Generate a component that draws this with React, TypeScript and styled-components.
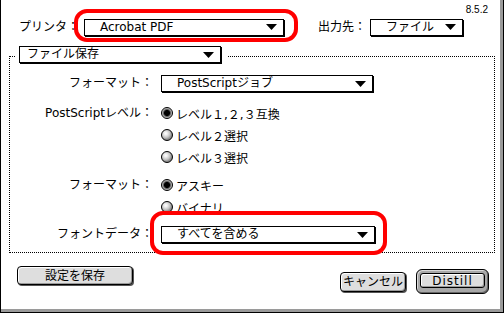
import React from 'react';
import styled, { createGlobalStyle } from 'styled-components';

const Global = createGlobalStyle`
  html, body { margin: 0; padding: 0; background: #fff; }
  body {
    width: 504px; height: 313px; overflow: hidden;
    font-family: "DejaVu Sans", "Noto Sans CJK JP", sans-serif;
    font-size: 12px; color: #000;
  }
`;

const Window = styled.div`
  box-sizing: border-box;
  width: 504px;
  height: 313px;
  border-left: 1px solid #000;
  border-right: 1px solid #000;
  border-bottom: 1px solid #000;
  box-shadow: inset -3px -3px 0 #9a9a9a;
  background: #fff;
  display: flex;
  flex-direction: column;
`;

const Version = styled.div`
  padding: 5px 15px 0 0;
  height: 10px;
  line-height: 10px;
  font-family: "Liberation Sans", sans-serif;
  font-size: 10px;
  text-align: right;
`;

const TopRow = styled.div`
  display: flex;
  align-items: center;
  margin-top: 3px;
  padding-left: 18px;
  height: 18px;
`;

const Label = styled.span<{ $ml?: number }>`
  margin-left: ${p => p.$ml ?? 0}px;
  white-space: nowrap;
  line-height: 18px;
`;

const Highlight = styled.div<{ $t: number; $r: number; $b: number; $l: number; $ml?: number }>`
  position: relative;
  display: flex;
  margin-left: ${p => p.$ml ?? 0}px;
  &::after {
    content: '';
    position: absolute;
    top: -${p => p.$t}px;
    right: -${p => p.$r}px;
    bottom: -${p => p.$b}px;
    left: -${p => p.$l}px;
    border: 4px solid #f00;
    border-radius: 13px;
    pointer-events: none;
  }
`;

const Popup = styled.div<{ $w: number; $pl?: number; $ml?: number }>`
  box-sizing: border-box;
  width: ${p => p.$w}px;
  height: 17px;
  margin-left: ${p => p.$ml ?? 0}px;
  border: 1px solid #000;
  box-shadow: 1px 1px 0 #000;
  background: #fff;
  display: flex;
  align-items: center;
  padding: 0 6px 0 ${p => p.$pl ?? 15}px;
  line-height: 15px;
  white-space: nowrap;
`;

const PopupText = styled.span`
  flex: 1;
`;

const ArrowSvg = styled.svg`
  display: block;
  flex: none;
`;

const Arrow = () => (
  <ArrowSvg width="11" height="6" viewBox="0 0 11 6">
    <polygon points="0,0 11,0 5.5,6" fill="#000" />
  </ArrowSvg>
);

const Group = styled.div`
  position: relative;
  box-sizing: border-box;
  width: 486px;
  margin: 20px 0 0 8px;
  padding: 18px 0 9px 0;
  border: 1px dotted #000;
  display: flex;
  flex-direction: column;
`;

const TabWrap = styled.div`
  position: absolute;
  top: -11px;
  left: 5px;
  padding: 0 6px 0 4px;
  background: #fff;
`;

const Row = styled.div<{ $mt: number }>`
  display: flex;
  align-items: flex-start;
  margin-top: ${p => p.$mt}px;
`;

const FieldLabel = styled.div<{ $lh: number }>`
  width: 143px;
  margin-right: 8px;
  text-align: right;
  white-space: nowrap;
  line-height: ${p => p.$lh}px;
`;

const RadioGroup = styled.div`
  display: flex;
  flex-direction: column;
`;

const RadioItem = styled.div`
  display: flex;
  align-items: center;
  height: 22px;
  gap: 3px;
  white-space: nowrap;
`;

const RadioDot = styled.span<{ $on?: boolean }>`
  box-sizing: border-box;
  width: 12px;
  height: 12px;
  border-radius: 50%;
  border: 1px solid #000;
  flex: none;
  background: ${p =>
    p.$on
      ? 'radial-gradient(circle at 50% 50%, #000 0 2.6px, #444 3.2px, #888 4px, #cfcfcf 5px)'
      : 'radial-gradient(circle at 38% 35%, #fff 0, #f0f0f0 1.5px, #c4c4c4 4px, #8a8a8a 6px)'};
`;

const BottomRow = styled.div`
  display: flex;
  align-items: flex-start;
  margin-top: 13px;
  padding: 0 14px 0 16px;
`;

const Button = styled.button<{ $w: number; $h: number; $mt?: number }>`
  box-sizing: border-box;
  width: ${p => p.$w}px;
  height: ${p => p.$h}px;
  margin: ${p => p.$mt ?? 0}px 0 0 0;
  padding: 0;
  border: 1px solid #000;
  border-radius: 4px;
  background: #dedede;
  box-shadow: inset 1px 1px 0 #fff, inset -1px -1px 0 #9a9a9a, 1px 1px 0 #555;
  font: inherit;
  line-height: 14px;
  color: #000;
  white-space: nowrap;
`;

const Spacer = styled.div`
  flex: 1;
`;

const DefaultRing = styled.div`
  box-sizing: border-box;
  width: 73px;
  height: 25px;
  margin: 3px 0 0 10px;
  padding: 3px;
  border: 1px solid #000;
  border-radius: 6px;
  background: #a8a8a8;
  box-shadow: inset 1px 1px 0 #d8d8d8, inset -1px -1px 0 #666;
  display: flex;
`;

const InnerButton = styled(Button)`
  flex: 1;
  border-radius: 3px;
  letter-spacing: 1px;
  box-shadow: inset 1px 1px 0 #fff, inset -1px -1px 0 #9a9a9a;
`;

export default function App() {
  return (
    <>
      <Global />
      <Window>
        <Version>8.5.2</Version>
        <TopRow>
          <Label>プリンタ：</Label>
          <Highlight $t={10} $r={14} $b={6} $l={10} $ml={5}>
            <Popup $w={200}>
              <PopupText>Acrobat PDF</PopupText>
              <Arrow />
            </Popup>
          </Highlight>
          <Label $ml={34}>出力先：</Label>
          <Popup $w={93} $ml={4}>
            <PopupText>ファイル</PopupText>
            <Arrow />
          </Popup>
        </TopRow>
        <Group>
          <TabWrap>
            <Popup $w={202} $pl={7}>
              <PopupText>ファイル保存</PopupText>
              <Arrow />
            </Popup>
          </TabWrap>
          <Row $mt={0}>
            <FieldLabel $lh={17}>フォーマット：</FieldLabel>
            <Popup $w={212}>
              <PopupText>PostScriptジョブ</PopupText>
              <Arrow />
            </Popup>
          </Row>
          <Row $mt={10}>
            <FieldLabel $lh={22}>PostScriptレベル：</FieldLabel>
            <RadioGroup>
              <RadioItem><RadioDot $on />レベル１,２,３互換</RadioItem>
              <RadioItem><RadioDot />レベル２選択</RadioItem>
              <RadioItem><RadioDot />レベル３選択</RadioItem>
            </RadioGroup>
          </Row>
          <Row $mt={6}>
            <FieldLabel $lh={22}>フォーマット：</FieldLabel>
            <RadioGroup>
              <RadioItem><RadioDot $on />アスキー</RadioItem>
              <RadioItem><RadioDot />バイナリ</RadioItem>
            </RadioGroup>
          </Row>
          <Row $mt={8}>
            <FieldLabel $lh={17}>フォントデータ：</FieldLabel>
            <Highlight $t={15} $r={12} $b={12} $l={11}>
              <Popup $w={214}>
                <PopupText>すべてを含める</PopupText>
                <Arrow />
              </Popup>
            </Highlight>
          </Row>
        </Group>
        <BottomRow>
          <Button $w={116} $h={19}>設定を保存</Button>
          <Spacer />
          <Button $w={66} $h={20} $mt={6}>キャンセル</Button>
          <DefaultRing>
            <InnerButton $w={63} $h={15}>Distill</InnerButton>
          </DefaultRing>
        </BottomRow>
      </Window>
    </>
  );
}
